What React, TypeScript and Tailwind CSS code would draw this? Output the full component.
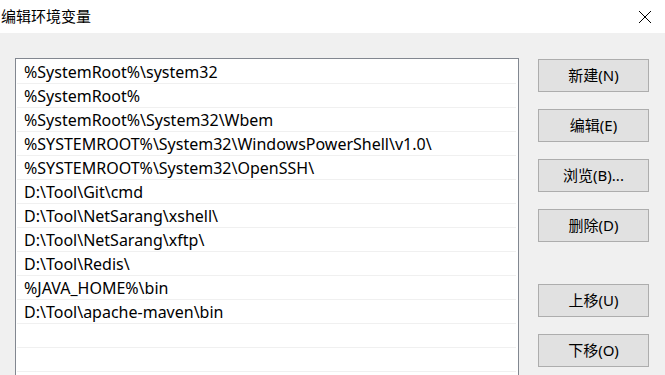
import React from 'react';

const paths = [
  '%SystemRoot%\\system32',
  '%SystemRoot%',
  '%SystemRoot%\\System32\\Wbem',
  '%SYSTEMROOT%\\System32\\WindowsPowerShell\\v1.0\\',
  '%SYSTEMROOT%\\System32\\OpenSSH\\',
  'D:\\Tool\\Git\\cmd',
  'D:\\Tool\\NetSarang\\xshell\\',
  'D:\\Tool\\NetSarang\\xftp\\',
  'D:\\Tool\\Redis\\',
  '%JAVA_HOME%\\bin',
  'D:\\Tool\\apache-maven\\bin',
  '',
  '',
  '',
];

const DialogButton = ({ label, className = '' }: { label: string; className?: string }) => (
  <button
    className={`w-[111px] h-[33px] bg-[#e1e1e1] border border-[#adadad] text-[15px] text-black flex items-center justify-center ${className}`}
  >
    {label}
  </button>
);

export default function App() {
  return (
    <div
      className="w-[665px] h-[375px] overflow-hidden bg-[#f0f0f0] flex flex-col"
      style={{ fontFamily: '"Noto Sans", "Noto Sans CJK SC", sans-serif' }}
    >
      {/* Title bar */}
      <div className="h-[33px] bg-white flex items-center justify-between pl-[1px] pr-[13px] shrink-0">
        <span className="text-[15px] text-black" style={{ fontFamily: '"Noto Sans CJK SC", sans-serif' }}>
          编辑环境变量
        </span>
        <svg width="14" height="14" viewBox="0 0 14 14" className="text-black">
          <path d="M1 1 L13 13 M13 1 L1 13" stroke="currentColor" strokeWidth="1" fill="none" />
        </svg>
      </div>

      {/* Body */}
      <div className="flex flex-1 pt-[25px] pl-[15px]">
        {/* List */}
        <div className="w-[504px] border border-[#828790] border-b-0 bg-white flex flex-col pt-[1px] px-[1px]">
          {paths.map((p, i) => (
            <div
              key={i}
              className="h-[24px] shrink-0 border-b border-[#f0f0f0] pl-[7px] text-[16px] leading-[24px] text-black whitespace-nowrap mr-[1px]"
            >
              {p}
            </div>
          ))}
        </div>

        {/* Buttons */}
        <div className="flex flex-col gap-[17px] pt-[1px] ml-[19px]" style={{ fontFamily: '"Noto Sans", "Noto Sans CJK SC", sans-serif' }}>
          <DialogButton label="新建(N)" />
          <DialogButton label="编辑(E)" />
          <DialogButton label="浏览(B)..." />
          <DialogButton label="删除(D)" />
          <DialogButton label="上移(U)" className="mt-[25px]" />
          <DialogButton label="下移(O)" />
        </div>
      </div>
    </div>
  );
}
